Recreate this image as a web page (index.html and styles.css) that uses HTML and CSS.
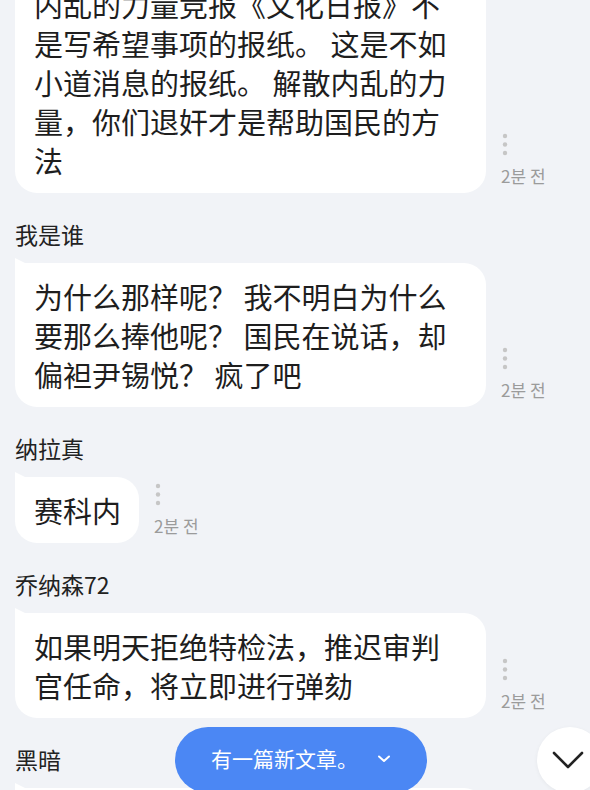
FILE: index.html
```html
<!DOCTYPE html>
<html lang="zh">
<head>
    <meta charset="UTF-8">
    <meta name="viewport" content="width=device-width, initial-scale=1.0">
    <title>评论</title>
    <link rel="stylesheet" href="styles.css">
</head>
<body>
    <div class="screen">
        <div class="chat">
            <div class="msg">
                <div class="row">
                    <div class="bubble">内乱的力量竞报《文化日报》不是写希望事项的报纸。 这是不如小道消息的报纸。 解散内乱的力量，你们退奸才是帮助国民的方法</div>
                    <div class="meta">
                        <svg class="kebab" width="8" height="24" viewBox="0 0 8 24"><circle cx="4" cy="3" r="2.2"/><circle cx="4" cy="11.5" r="2.2"/><circle cx="4" cy="20" r="2.2"/></svg>
                        <span class="time">2분 전</span>
                    </div>
                </div>
            </div>

            <div class="msg">
                <div class="name">我是谁</div>
                <div class="row">
                    <div class="bubble">为什么那样呢？ 我不明白为什么要那么捧他呢？ 国民在说话，却偏袒尹锡悦？ 疯了吧</div>
                    <div class="meta">
                        <svg class="kebab" width="8" height="24" viewBox="0 0 8 24"><circle cx="4" cy="3" r="2.2"/><circle cx="4" cy="11.5" r="2.2"/><circle cx="4" cy="20" r="2.2"/></svg>
                        <span class="time">2분 전</span>
                    </div>
                </div>
            </div>

            <div class="msg">
                <div class="name">纳拉真</div>
                <div class="row">
                    <div class="bubble">赛科内</div>
                    <div class="meta">
                        <svg class="kebab" width="8" height="24" viewBox="0 0 8 24"><circle cx="4" cy="3" r="2.2"/><circle cx="4" cy="11.5" r="2.2"/><circle cx="4" cy="20" r="2.2"/></svg>
                        <span class="time">2분 전</span>
                    </div>
                </div>
            </div>

            <div class="msg">
                <div class="name">乔纳森72</div>
                <div class="row">
                    <div class="bubble">如果明天拒绝特检法，推迟审判官任命，将立即进行弹劾</div>
                    <div class="meta">
                        <svg class="kebab" width="8" height="24" viewBox="0 0 8 24"><circle cx="4" cy="3" r="2.2"/><circle cx="4" cy="11.5" r="2.2"/><circle cx="4" cy="20" r="2.2"/></svg>
                        <span class="time">2분 전</span>
                    </div>
                </div>
            </div>

            <div class="msg">
                <div class="name">黑暗</div>
                <div class="row">
                    <div class="bubble bubble-last"></div>
                </div>
            </div>
        </div>

        <button class="new-post">
            有一篇新文章。
            <svg width="14" height="10" viewBox="0 0 14 10"><path d="M2 2.5 L7 7 L12 2.5" fill="none" stroke="#fff" stroke-width="2" stroke-linecap="round" stroke-linejoin="round"/></svg>
        </button>

        <button class="scroll-down">
            <svg width="32" height="18" viewBox="0 0 32 18"><path d="M2 2 L16 16 L30 2" fill="none" stroke="#222" stroke-width="2.6" stroke-linecap="round" stroke-linejoin="round"/></svg>
        </button>
    </div>
</body>
</html>
```

FILE: styles.css
```css
html, body {
    margin: 0;
    padding: 0;
}
body {
    font-family: "Noto Sans CJK SC", "Noto Sans CJK KR", "Noto Sans", sans-serif;
    color: #222;
    background-color: #f1f3f7;
}
.screen {
    position: relative;
    height: 790px;
    overflow: hidden;
}
.chat {
    margin-top: -29px;
    padding: 0 15px;
}
.msg + .msg {
    margin-top: 26px;
}
.name {
    font-size: 23px;
    line-height: 30px;
    margin-bottom: 14px;
    color: #222;
}
.row {
    display: flex;
    align-items: flex-end;
    gap: 15px;
}
.bubble {
    position: relative;
    max-width: 434px;
    padding: 14px 18px 13px 19px;
    background-color: #fff;
    border-radius: 0 22px 22px 22px;
    font-size: 29px;
    line-height: 39px;
    color: #1e1e1e;
}
.bubble::before {
    content: "";
    position: absolute;
    top: -5px;
    left: 0;
    width: 0;
    height: 0;
    border-bottom: 5px solid #fff;
    border-right: 10px solid transparent;
}
.bubble-last {
    width: 434px;
    height: 60px;
}
.meta {
    display: flex;
    flex-direction: column;
    align-items: flex-start;
    padding-bottom: 6px;
}
.kebab {
    fill: #c6c6c6;
}
.time {
    margin-top: 8px;
    font-family: "Noto Sans CJK KR", "Noto Sans", sans-serif;
    font-size: 17px;
    line-height: 22px;
    color: #9b9b9b;
}
.new-post {
    position: absolute;
    left: 175px;
    top: 727px;
    width: 252px;
    height: 66px;
    border: none;
    border-radius: 33px;
    background-color: #4b87f4;
    color: #fff;
    font-family: "Noto Sans CJK SC", sans-serif;
    font-size: 21px;
    display: flex;
    align-items: center;
    justify-content: center;
    gap: 19px;
    padding: 0 0 4px 0;
}
.new-post svg {
    margin-top: 2px;
}
.scroll-down {
    position: absolute;
    left: 537px;
    top: 727px;
    width: 66px;
    height: 66px;
    border: none;
    border-radius: 50%;
    background-color: #fff;
    box-shadow: 0 1px 4px rgba(0, 0, 0, 0.05);
    display: flex;
    align-items: center;
    justify-content: flex-start;
    padding: 0 0 0 15px;
}
```
